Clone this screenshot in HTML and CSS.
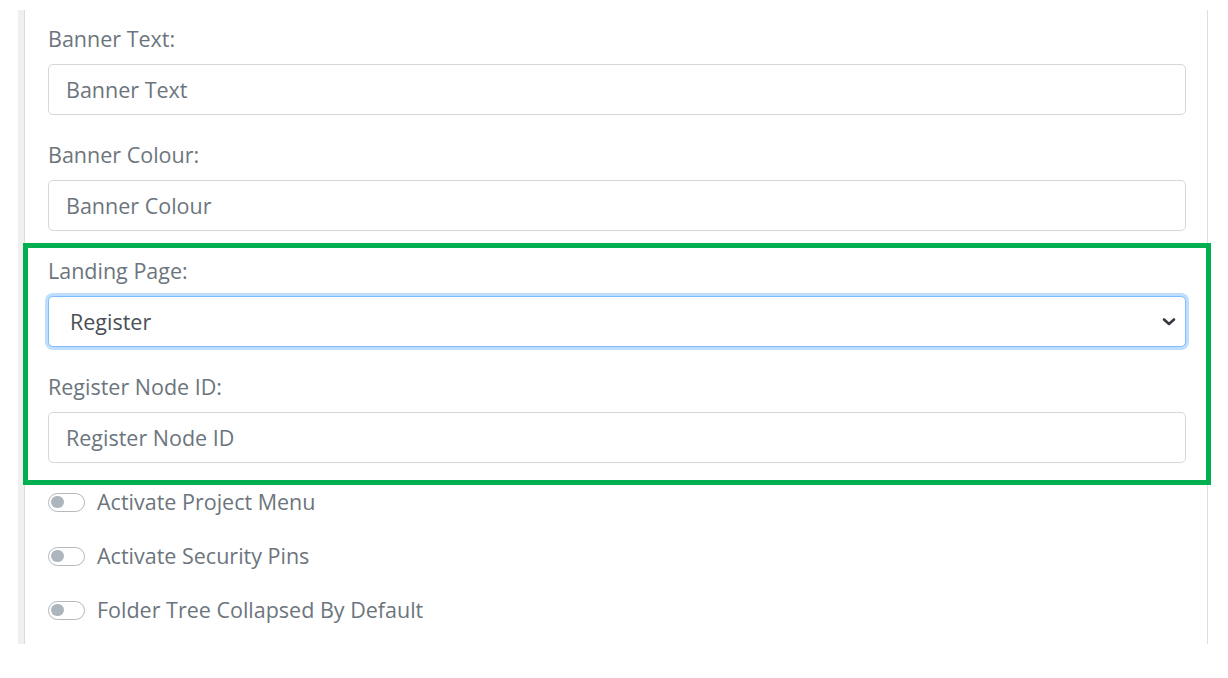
FILE: index.html
```html
<!DOCTYPE html>
<html>
<head>
<meta charset="utf-8">
<link rel="stylesheet" href="styles.css">
</head>
<body>
<div class="page">
  <div class="card">
    <div class="group">
      <label class="label">Banner Text:</label>
      <input class="input" type="text" placeholder="Banner Text">
    </div>
    <div class="group">
      <label class="label">Banner Colour:</label>
      <input class="input" type="text" placeholder="Banner Colour">
    </div>
    <div class="highlight">
      <div class="group">
        <label class="label">Landing Page:</label>
        <div class="select-wrap">
          <select class="select"><option>Register</option></select>
          <svg class="chevron" width="14" height="10" viewBox="0 0 14 10"><path d="M2 2.5 L7 7 L12 2.5" fill="none" stroke="#343a40" stroke-width="2.6" stroke-linecap="round" stroke-linejoin="round"/></svg>
        </div>
      </div>
      <div class="group last">
        <label class="label">Register Node ID:</label>
        <input class="input" type="text" placeholder="Register Node ID">
      </div>
    </div>
    <div class="switches">
      <div class="switch"><span class="toggle"></span><span class="switch-text">Activate Project Menu</span></div>
      <div class="switch"><span class="toggle"></span><span class="switch-text">Activate Security Pins</span></div>
      <div class="switch"><span class="toggle"></span><span class="switch-text">Folder Tree Collapsed By Default</span></div>
    </div>
  </div>
</div>
</body>
</html>
```
FILE: styles.css
```css
* { box-sizing: border-box; }
html, body { margin: 0; padding: 0; background: #fff; }
body { font-family: "Open Sans", "Liberation Sans", sans-serif; color: #6c757d; }

.page { padding: 10px 0 0 18px; width: 1208px; }

.card {
  height: 634px;
  border-left: 7px solid #f0f0f0;
  border-right: 1px solid #dedede;
  padding: 14px 21px 0 23px;
  position: relative;
}
.card::before {
  content: "";
  position: absolute;
  left: -1px; top: 0; bottom: 0; width: 1px;
  background: #dcdcdc;
}

.group { margin-bottom: 25px; }
.group.last { margin-bottom: 0; }

.label {
  display: block;
  font-size: 21.5px;
  line-height: 30px;
  height: 30px;
  margin-bottom: 10px;
  color: #6c757d;
}

.input, .select {
  display: block;
  width: 100%;
  height: 51px;
  border: 1px solid #d4d8dd;
  border-radius: 5px;
  background: #fff;
  font-family: "Open Sans", "Liberation Sans", sans-serif;
  font-size: 21.5px;
  padding: 0 17px;
  color: #495057;
  outline: none;
}
.input::placeholder { color: #6c757d; opacity: 1; }

.select-wrap { position: relative; }
.select {
  -webkit-appearance: none;
  appearance: none;
  padding-left: 21px;
  color: #4a4f55;
  border-color: #80bdff;
  box-shadow: 0 0 0 3px rgba(0, 123, 255, 0.25);
}
.chevron { position: absolute; right: 10px; top: 21px; }

.highlight { position: relative; }
.highlight::after {
  content: "";
  position: absolute;
  left: -25px; right: -25px; top: -13px; bottom: -22px;
  border: 5px solid #00b050;
  pointer-events: none;
}

.switches { margin-top: 24px; }
.switch {
  display: flex;
  align-items: center;
  gap: 12px;
  height: 30px;
  margin-bottom: 24px;
}
.toggle {
  width: 37px;
  height: 19px;
  border: 1.5px solid #b4b9be;
  border-radius: 10px;
  position: relative;
  flex: none;
}
.toggle::before {
  content: "";
  position: absolute;
  left: 2px; top: 2px;
  width: 12.5px; height: 12.5px;
  border-radius: 50%;
  background: #adb5bd;
}
.switch-text { font-size: 21.5px; line-height: 30px; color: #6c757d; }
```
